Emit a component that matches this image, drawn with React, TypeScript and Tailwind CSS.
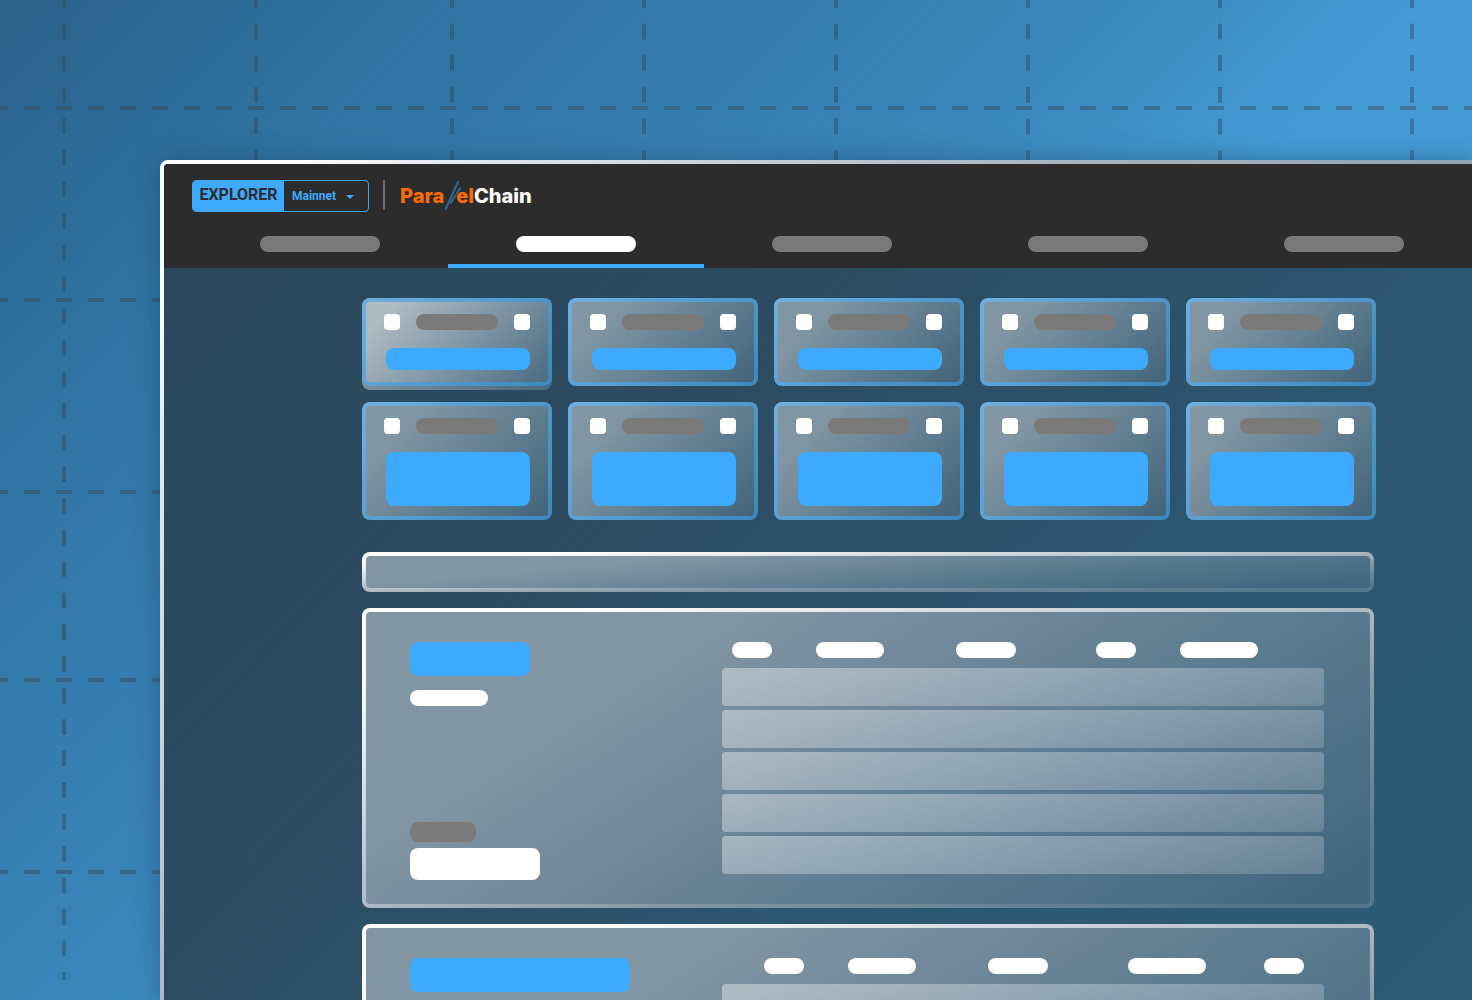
import type { ReactNode } from 'react'

const tabs = ['Dashboard', 'Blocks', 'Transactions', 'Validators', 'Tokens']
const verticals = [64, 256, 452, 644, 836, 1028, 1220, 1412]
const horizontals = [108, 300, 492, 680, 872]

function GridLines() {
  return (
    <svg className="absolute inset-0 w-full h-full" stroke="#2c4a5e" strokeOpacity="0.45" strokeWidth="4" fill="none" aria-hidden="true">
      {verticals.map((x) => (
        <path key={x} d={`M${x} 0V980`} pathLength={124} strokeDasharray="2 2" strokeDashoffset="1" />
      ))}
      {horizontals.map((y) => (
        <path key={y} d={`M0 ${y}H4000`} strokeDasharray="16 16" strokeDashoffset="8" />
      ))}
    </svg>
  )
}

function Logo() {
  return (
    <a href="#" className="flex items-center font-['Inter',sans-serif] font-extrabold text-[20px] leading-8 text-white">
      <span className="text-[#ff6b00]">Para</span>
      <svg width="12" height="32" viewBox="0 0 12 32" className="overflow-visible" fill="none" stroke="#2f6894" strokeWidth="2" aria-hidden="true">
        <path d="M1.500 29.500L14.500 1M6.500 23.500L16.500 7.500" />
      </svg>
      <span className="text-[#ff6b00]">el</span>
      <span>Chain</span>
    </a>
  )
}

function Header() {
  return (
    <header className="bg-[#2c2c2c] pt-4 pl-7">
      <div className="flex h-8">
        <div className="flex border border-[#3daaff] rounded-sm overflow-hidden font-['Roboto',sans-serif]">
          <div className="w-[91px] bg-[#3daaff] text-[#2c2c2c] font-bold text-base leading-7 text-center">EXPLORER</div>
          <div className="relative">
            <select aria-label="Network" className="appearance-none w-[84px] h-full pl-2 bg-transparent text-[#3daaff] font-bold text-xs">
              <option>Mainnet</option>
            </select>
            <svg width="8" height="4" viewBox="0 0 8 4" className="absolute right-[14px] top-[14px] pointer-events-none" fill="#3daaff" aria-hidden="true">
              <path d="M0 0h8L4 4z" />
            </svg>
          </div>
        </div>
        <div className="w-0.5 h-[30px] ml-[14px] mr-[15px] bg-[#6f6f6f]"></div>
        <Logo />
      </div>
      <nav className="grid grid-cols-5">
        {tabs.map((tab, i) => (
          <button
            key={tab}
            aria-label={tab}
            className={`flex justify-center h-14 pt-6 border-b-4 ${i === 1 ? 'border-[#3daaff]' : 'border-transparent'}`}
          >
            <span className={`w-[120px] h-4 rounded-full ${i === 1 ? 'bg-white' : 'bg-[#7a7a7a]'}`}></span>
          </button>
        ))}
      </nav>
    </header>
  )
}

function StatCard({ tall = false, active = false }: { tall?: boolean; active?: boolean }) {
  const fill = active
    ? 'bg-[linear-gradient(135deg,#b0bcc4_10%,#8a9dab_45%,#4a6c83_100%)]'
    : 'bg-[linear-gradient(135deg,#8295a2_20%,#5f7d8f_62%,#426479_100%)]'

  return (
    <div className={active ? 'rounded-lg pb-1 -mb-1 bg-linear-to-r from-[#7f909c] to-[#466a80]' : ''}>
      <div className="rounded-lg p-1 bg-[linear-gradient(135deg,#70b0e0,#559cd0_50%,#3c88bc)]">
        <div className={`rounded-sm px-[18px] pt-3 ${tall ? 'pb-2.5' : 'pb-3'} ${fill}`}>
          <div className="flex gap-4">
            <div className="size-4 rounded-sm bg-white"></div>
            <div className="flex-1 h-4 rounded-full bg-[#7a7a7a]"></div>
            <div className="size-4 rounded-sm bg-white"></div>
          </div>
          <div className={`mt-[18px] ml-0.5 rounded-lg bg-[#3daaff] ${tall ? 'h-[54px]' : 'h-[22px]'}`}></div>
        </div>
      </div>
    </div>
  )
}

function Frame({ children }: { children: ReactNode }) {
  return (
    <div className="mt-4 mr-0.5 rounded-lg p-1 bg-[linear-gradient(to_bottom_right,#fff_10%,#e9ecf0_22%,#adb9c3_50%,#8397a6_65%,#55778c_92%)]">
      {children}
    </div>
  )
}

function Panel({ title, children }: { title: string; children: ReactNode }) {
  return (
    <Frame>
      <section className="rounded-sm pt-[30px] pb-6 pl-11 pr-[46px] grid grid-cols-[312px_1fr] bg-[linear-gradient(148deg,#8295a2_25%,#73899a_42%,#5d7d90_62%,#446780_95%)]">
        <div>
          <div className={`h-[34px] rounded-lg bg-[#3daaff] ${title}`}></div>
          <div className="mt-3.5 w-[78px] h-4 rounded-full bg-white"></div>
          <div className="mt-[116px] w-[66px] h-5 rounded-lg bg-[#7a7a7a]"></div>
          <div className="mt-1.5 w-[130px] h-8 rounded-lg bg-white"></div>
        </div>
        <div>
          <div className="flex h-4">{children}</div>
          <div className="mt-2.5 flex flex-col gap-1">
            {[0, 1, 2, 3, 4].map((row) => (
              <div key={row} className="h-[38px] rounded-sm bg-[linear-gradient(170deg,#ffffff66,#ffffff2b)]"></div>
            ))}
          </div>
        </div>
      </section>
    </Frame>
  )
}

function Pill({ className }: { className: string }) {
  return <div className={`h-4 rounded-full bg-white ${className}`}></div>
}

export default function App() {
  return (
    <div className="relative h-screen overflow-hidden flex flex-col pt-40 pl-40 bg-[linear-gradient(135deg,#2b628c_0%,#3175a4_20%,#3a86ba_44%,#459bd5_58%)]">
      <GridLines />

      <div className="relative flex-1 min-h-0 rounded-tl-lg pt-1 pl-1 shadow-[0_0_24px_#1c436680] bg-[linear-gradient(135deg,#fff_6%,#e6e9ed_13%,#c8d0d6_27%,#b0bcc5_37%,#8fa2b3_61%)]">
        <div className="h-full overflow-hidden rounded-tl-sm bg-[linear-gradient(135deg,#2b485b_0%,#2c4b60_35%,#2d5872_70%,#2d5c76_100%)]">
          <Header />

          <main className="pt-[30px] pl-[198px] pr-24">
            <div className="grid grid-cols-5 gap-4 mb-8">
              <StatCard active />
              <StatCard />
              <StatCard />
              <StatCard />
              <StatCard />
              <StatCard tall />
              <StatCard tall />
              <StatCard tall />
              <StatCard tall />
              <StatCard tall />
            </div>

            <Frame>
              <div className="h-8 rounded-sm bg-[linear-gradient(175deg,#8295a2_25%,#587a8e_62%,#436880_92%)]"></div>
            </Frame>

            <Panel title="w-[120px]">
              <Pill className="w-10 ml-2.5" />
              <Pill className="w-[68px] ml-11" />
              <Pill className="w-[60px] ml-[72px]" />
              <Pill className="w-10 ml-20" />
              <Pill className="w-[78px] ml-11" />
            </Panel>

            <Panel title="w-[220px]">
              <Pill className="w-10 ml-[42px]" />
              <Pill className="w-[68px] ml-11" />
              <Pill className="w-[60px] ml-[72px]" />
              <Pill className="w-[78px] ml-20" />
              <Pill className="w-10 ml-[58px]" />
            </Panel>
          </main>
        </div>
      </div>
    </div>
  )
}
